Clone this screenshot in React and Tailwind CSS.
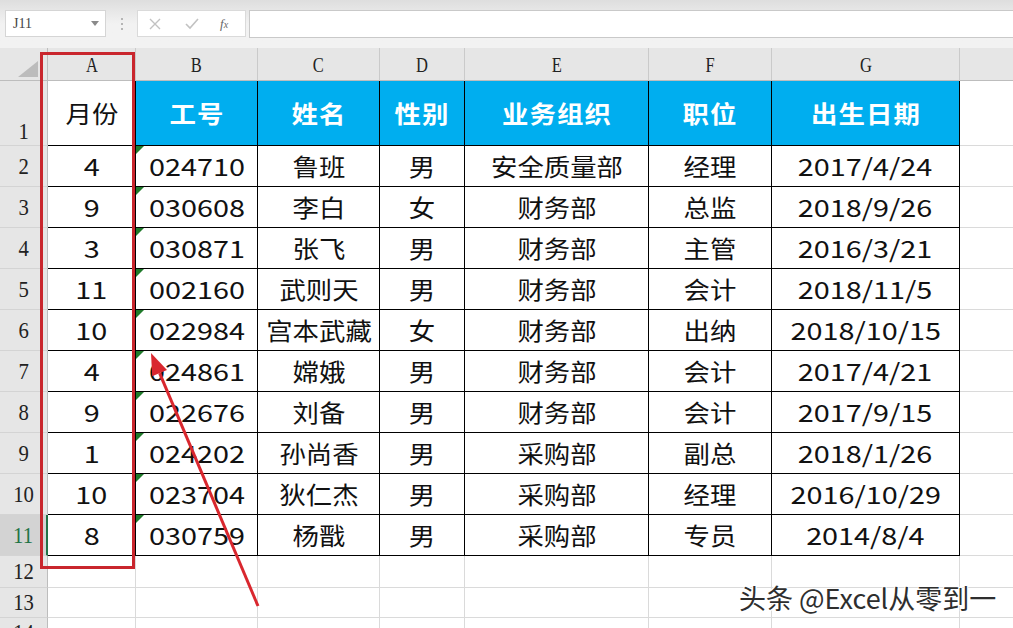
import React from 'react';

const CJK = { fontFamily: '"Noto Sans CJK SC", "Noto Sans", sans-serif' };
const SERIF = { fontFamily: '"Liberation Serif", "DejaVu Serif", serif' };

const COLS = ['A', 'B', 'C', 'D', 'E', 'F', 'G'];
const WIDTHS = ['w-[88px]', 'w-[122px]', 'w-[122px]', 'w-[85px]', 'w-[184px]', 'w-[123px]', 'w-[188px]'];
const HEADS = ['工号', '姓名', '性别', '业务组织', '职位', '出生日期'];

const ROWS = [
  ['4', '024710', '鲁班', '男', '安全质量部', '经理', '2017/4/24'],
  ['9', '030608', '李白', '女', '财务部', '总监', '2018/9/26'],
  ['3', '030871', '张飞', '男', '财务部', '主管', '2016/3/21'],
  ['11', '002160', '武则天', '男', '财务部', '会计', '2018/11/5'],
  ['10', '022984', '宫本武藏', '女', '财务部', '出纳', '2018/10/15'],
  ['4', '024861', '嫦娥', '男', '财务部', '会计', '2017/4/21'],
  ['9', '022676', '刘备', '男', '财务部', '会计', '2017/9/15'],
  ['1', '024202', '孙尚香', '男', '采购部', '副总', '2018/1/26'],
  ['10', '023704', '狄仁杰', '男', '采购部', '经理', '2016/10/29'],
  ['8', '030759', '杨戬', '男', '采购部', '专员', '2014/8/4'],
];

function RowHead({ n, active, bottom }) {
  return (
    <div
      className={`w-[48px] shrink-0 flex justify-center border-b border-[#d4d4d4] ${bottom ? 'items-end pb-[2px]' : 'items-center'} ${active ? 'bg-[#d3d3d3] text-[#217346] border-r-2 border-r-[#217346]' : 'bg-[#e6e6e6] text-[#222] border-r border-r-[#bdbdbd]'}`}
    >
      <span className="inline-block text-[23px] leading-none scale-x-90" style={SERIF}>{n}</span>
    </div>
  );
}

function Toolbar() {
  return (
    <div className="h-[48px] bg-[#f1f1f1] bg-gradient-to-b from-[#dedede] via-[#f2f2f2] to-[#f2f2f2] flex items-start pt-[10px] pl-[5px]">
      <div className="w-[101px] h-[27px] bg-white border border-[#d5d5d5] flex items-center justify-between pl-[7px] pr-[6px]">
        <span className="text-[14px] text-[#444]" style={SERIF}>J11</span>
        <svg width="8" height="5" viewBox="0 0 8 5"><path d="M0 0h8L4 5z" fill="#8a8a8a" /></svg>
      </div>
      <div className="w-[31px] h-[27px] flex flex-col items-center justify-center gap-[3px]">
        <span className="w-[2px] h-[2px] bg-[#b5b5b5]" />
        <span className="w-[2px] h-[2px] bg-[#b5b5b5]" />
        <span className="w-[2px] h-[2px] bg-[#b5b5b5]" />
      </div>
      <div className="w-[109px] h-[27px] bg-white border border-[#dadada] flex items-center pl-[11px]">
        <svg width="12" height="12" viewBox="0 0 12 12"><path d="M1 1l10 10M11 1L1 11" stroke="#c2c2c2" strokeWidth="1.4" /></svg>
        <svg className="ml-[24px]" width="14" height="12" viewBox="0 0 14 12"><path d="M1 6l4 4 8-9" stroke="#c2c2c2" strokeWidth="1.6" fill="none" /></svg>
        <span className="ml-[21px] text-[13px] italic text-[#666]" style={SERIF}>f<span className="text-[10px]">x</span></span>
      </div>
      <div className="ml-[3px] flex-1 h-[28px] bg-white border border-[#c9c9c9] border-r-0" />
    </div>
  );
}

function ColHeader() {
  return (
    <div className="h-[33px] flex">
      <div className="w-[48px] shrink-0 bg-[#e6e6e6] border-r border-b border-[#bdbdbd] relative">
        <svg className="absolute left-[18px] top-[13px]" width="20" height="16" viewBox="0 0 20 16"><path d="M20 0V16H0z" fill="#bcbcbc" /></svg>
      </div>
      {COLS.map((c, i) => (
        <div key={c} className={`${WIDTHS[i]} shrink-0 bg-[#e6e6e6] border-r border-b border-r-[#cacaca] border-b-[#bdbdbd] flex items-center justify-center`}>
          <span className="inline-block text-[22px] leading-none scale-x-75 text-[#222] pt-[2px]" style={SERIF}>{c}</span>
        </div>
      ))}
      <div className="flex-1 bg-[#e6e6e6] border-b border-[#bdbdbd]" />
    </div>
  );
}

function DataRow({ n, cells }) {
  return (
    <div className="h-[41px] flex">
      <RowHead n={n} active={n === 11} />
      {cells.map((v, i) => {
        const numeric = /^[\d/]+$/.test(v);
        return (
          <div
            key={i}
            className={`${WIDTHS[i]} shrink-0 relative border-r border-b border-black flex items-center ${i === 1 ? 'justify-start pl-[13px]' : 'justify-center'}`}
          >
            {i === 1 && (
              <svg className="absolute left-0 top-0" width="8" height="8" viewBox="0 0 8 8"><path d="M0 0h8L0 8z" fill="#1f7a2a" /></svg>
            )}
            <span
              className={`inline-block text-[24px] leading-none text-[#111] ${numeric ? 'scale-x-[1.2]' : 'scale-x-110'} ${i === 1 ? 'origin-left' : ''}`}
              style={CJK}
            >
              {v}
            </span>
          </div>
        );
      })}
      <div className="flex-1 border-b border-[#dadada]" />
    </div>
  );
}

function EmptyRow({ n, h }) {
  return (
    <div className={`${h} flex`}>
      <RowHead n={n} />
      {WIDTHS.map((w, i) => (
        <div key={i} className={`${w} shrink-0 border-r border-b border-[#dadada]`} />
      ))}
      <div className="flex-1 border-b border-[#dadada]" />
    </div>
  );
}

export default function App() {
  return (
    <div className="w-[1013px] h-[628px] overflow-hidden relative bg-white">
      <Toolbar />
      <ColHeader />

      {/* row 1: headings */}
      <div className="h-[65px] flex">
        <RowHead n={1} bottom />
        <div className={`${WIDTHS[0]} shrink-0 border-r border-b border-black flex items-center justify-center`}>
          <span className="inline-block text-[24px] leading-none text-[#111] scale-x-110" style={CJK}>月份</span>
        </div>
        {HEADS.map((h, i) => (
          <div key={h} className={`${WIDTHS[i + 1]} shrink-0 bg-[#00aeef] border-r border-b border-black flex items-center justify-center`}>
            <span className="inline-block text-[24px] leading-none font-bold text-white scale-x-110 tracking-[1px]" style={CJK}>{h}</span>
          </div>
        ))}
        <div className="flex-1 border-b border-[#dadada]" />
      </div>

      {ROWS.map((r, i) => (
        <DataRow key={i} n={i + 2} cells={r} />
      ))}

      <EmptyRow n={12} h="h-[32px]" />
      <EmptyRow n={13} h="h-[30px]" />
      <EmptyRow n={14} h="h-[30px]" />

      {/* annotation overlays */}
      <div className="absolute left-[40px] top-[52px] w-[95px] h-[517px] border-[3px] border-[#c9262d]" />
      <svg className="absolute inset-0 pointer-events-none" width="1013" height="628" viewBox="0 0 1013 628">
        <line x1="258" y1="606" x2="159.6" y2="373.2" stroke="#d9272e" strokeWidth="3" />
        <polygon points="151,353 152.2,376.3 167,370.1" fill="#d9272e" />
      </svg>
      <div
        className="absolute left-[739px] top-[584px] text-[27px] leading-none text-[#2e2e2e] whitespace-nowrap"
        style={{ ...CJK, textShadow: '0 0 2px #fff, 1px 1px 0 #fff, -1px -1px 0 #fff, 1px -1px 0 #fff, -1px 1px 0 #fff' }}
      >
        头条 @Excel从零到一
      </div>
    </div>
  );
}
